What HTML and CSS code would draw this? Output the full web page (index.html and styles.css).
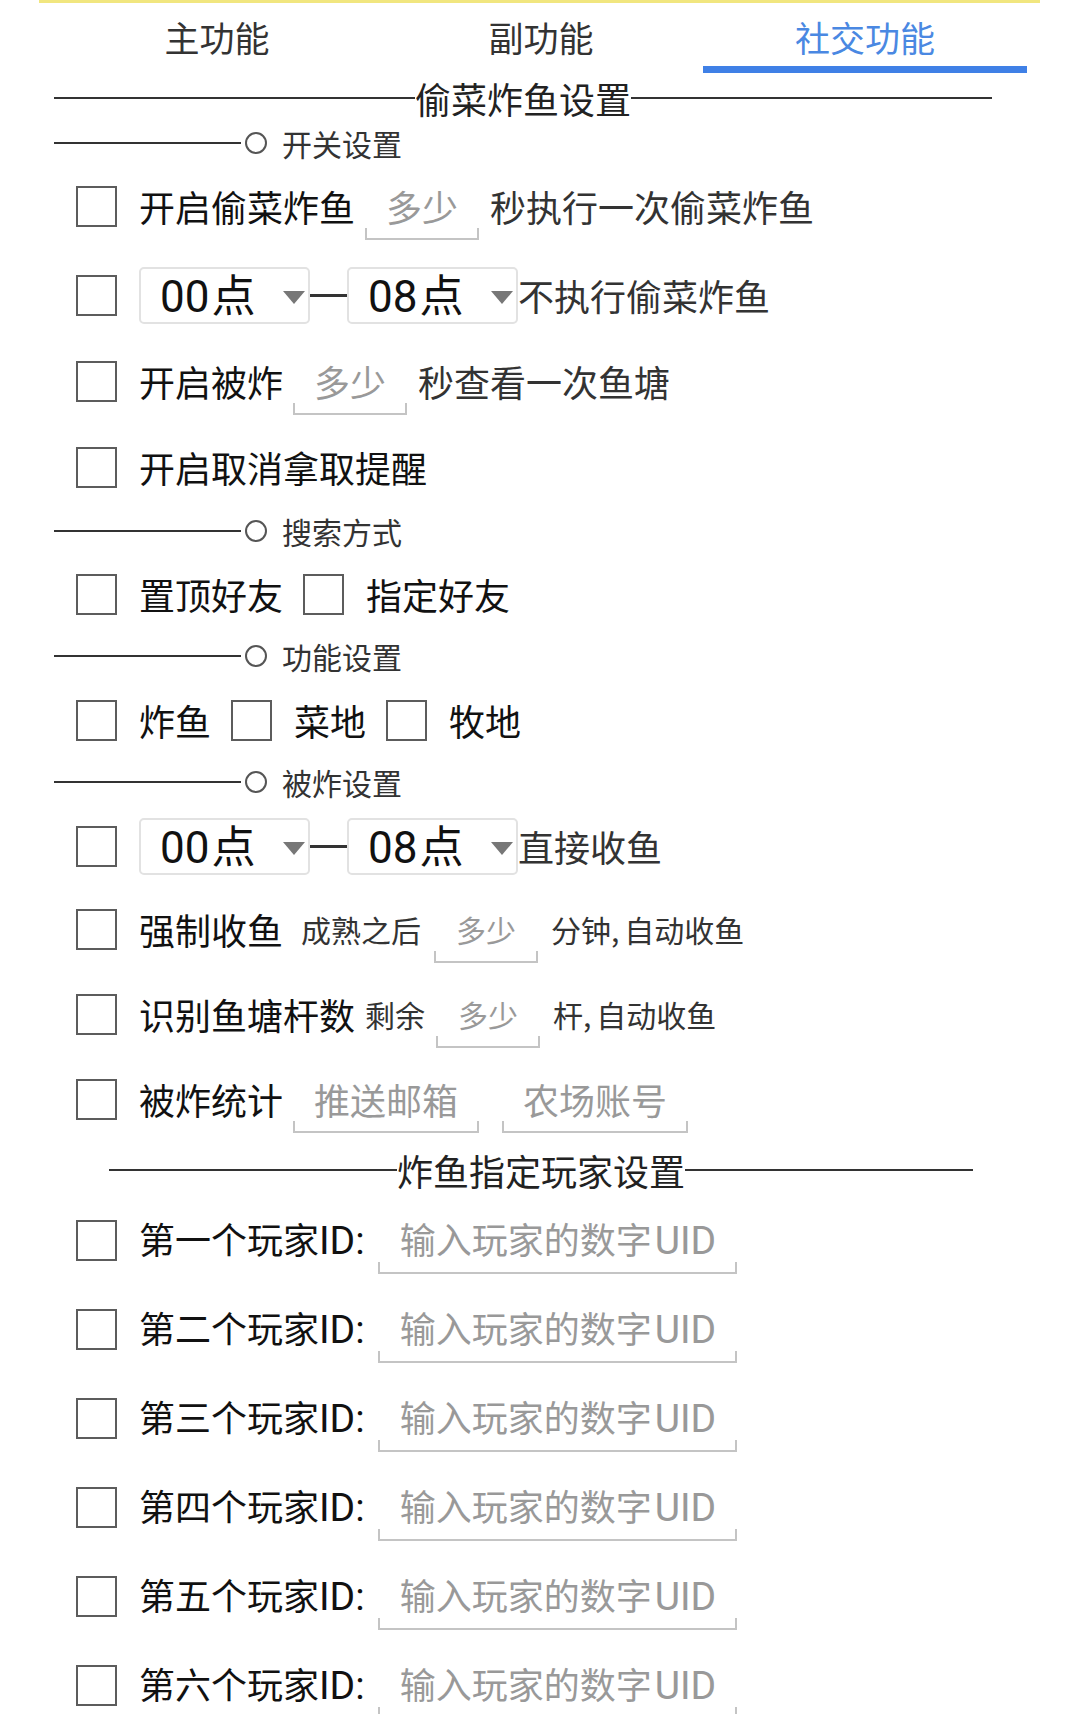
FILE: index.html
```html
<!DOCTYPE html>
<html lang="zh-CN">
<head>
<meta charset="utf-8">
<title>社交功能</title>
<link rel="stylesheet" href="styles.css">
</head>
<body>
<div class="topbar"></div>
<nav class="tabs">
  <div class="tab">主功能</div>
  <div class="tab">副功能</div>
  <div class="tab active">社交功能</div>
</nav>

<div class="heading heading-main mt-5"><span class="rule"></span><span>偷菜炸鱼设置</span><span class="rule"></span></div>

<div class="sub mt-10"><span class="sub-rule"></span><span class="dot"></span><span>开关设置</span></div>

<div class="row mt-20">
  <span class="cb"></span><span class="label">开启偷菜炸鱼</span>
  <span class="field"><span class="ph">多少</span></span>
  <span class="note">秒执行一次偷菜炸鱼</span>
</div>

<div class="row mt-32">
  <span class="cb"></span>
  <span class="select"><span class="val"><span class="num">00</span>点</span><span class="caret"></span></span>
  <span class="range-dash"></span>
  <span class="select"><span class="val"><span class="num">08</span>点</span><span class="caret"></span></span>
  <span class="note">不执行偷菜炸鱼</span>
</div>

<div class="row mt-29">
  <span class="cb"></span><span class="label">开启被炸</span>
  <span class="field"><span class="ph">多少</span></span>
  <span class="note">秒查看一次鱼塘</span>
</div>

<div class="row mt-29">
  <span class="cb"></span><span class="label">开启取消拿取提醒</span>
</div>

<div class="sub mt-20"><span class="sub-rule"></span><span class="dot"></span><span>搜索方式</span></div>

<div class="row mt-20">
  <span class="cb"></span><span class="opt">置顶好友</span>
  <span class="cb"></span><span class="opt">指定好友</span>
</div>

<div class="sub mt-18"><span class="sub-rule"></span><span class="dot"></span><span>功能设置</span></div>

<div class="row mt-21">
  <span class="cb"></span><span class="opt">炸鱼</span>
  <span class="cb"></span><span class="opt">菜地</span>
  <span class="cb"></span><span class="opt">牧地</span>
</div>

<div class="sub mt-18"><span class="sub-rule"></span><span class="dot"></span><span>被炸设置</span></div>

<div class="row mt-21">
  <span class="cb"></span>
  <span class="select"><span class="val"><span class="num">00</span>点</span><span class="caret"></span></span>
  <span class="range-dash"></span>
  <span class="select"><span class="val"><span class="num">08</span>点</span><span class="caret"></span></span>
  <span class="note">直接收鱼</span>
</div>

<div class="row mt-26">
  <span class="cb"></span><span class="label">强制收鱼</span>
  <span class="small small-gap">成熟之后</span>
  <span class="field field-sm"><span class="ph">多少</span></span>
  <span class="note note-sm">分钟<span class="comma">,</span>自动收鱼</span>
</div>

<div class="row mt-28">
  <span class="cb"></span><span class="label">识别鱼塘杆数</span>
  <span class="small small-tight">剩余</span>
  <span class="field field-sm"><span class="ph">多少</span></span>
  <span class="note note-sm">杆<span class="comma">,</span>自动收鱼</span>
</div>

<div class="row mt-28">
  <span class="cb"></span><span class="label">被炸统计</span>
  <span class="field field-gap"><span class="ph">推送邮箱</span></span>
  <span class="field"><span class="ph">农场账号</span></span>
</div>

<div class="heading heading-players mt-22"><span class="rule"></span><span>炸鱼指定玩家设置</span><span class="rule"></span></div>

<div class="players">
  <div class="row player">
    <span class="cb"></span><span class="label label-id">第一个玩家<span class="lat">ID:</span></span>
    <span class="field field-uid"><span class="ph">输入玩家的数字<span class="lat">UID</span></span></span>
  </div>
  <div class="row player">
    <span class="cb"></span><span class="label label-id">第二个玩家<span class="lat">ID:</span></span>
    <span class="field field-uid"><span class="ph">输入玩家的数字<span class="lat">UID</span></span></span>
  </div>
  <div class="row player">
    <span class="cb"></span><span class="label label-id">第三个玩家<span class="lat">ID:</span></span>
    <span class="field field-uid"><span class="ph">输入玩家的数字<span class="lat">UID</span></span></span>
  </div>
  <div class="row player">
    <span class="cb"></span><span class="label label-id">第四个玩家<span class="lat">ID:</span></span>
    <span class="field field-uid"><span class="ph">输入玩家的数字<span class="lat">UID</span></span></span>
  </div>
  <div class="row player">
    <span class="cb"></span><span class="label label-id">第五个玩家<span class="lat">ID:</span></span>
    <span class="field field-uid"><span class="ph">输入玩家的数字<span class="lat">UID</span></span></span>
  </div>
  <div class="row player">
    <span class="cb"></span><span class="label label-id">第六个玩家<span class="lat">ID:</span></span>
    <span class="field field-uid"><span class="ph">输入玩家的数字<span class="lat">UID</span></span></span>
  </div>
</div>
</body>
</html>
```
FILE: styles.css
```css
* { box-sizing: border-box; }
html, body { margin: 0; padding: 0; background: #ffffff; }
body {
  width: 1080px;
  font-family: "Noto Sans CJK SC", Roboto, sans-serif;
  color: #111;
  line-height: 1.3;
}

/* top edge */
.topbar { height: 3px; margin: 0 40px 0 39px; background: #f1e67f; }

/* tabs */
.tabs { display: grid; grid-template-columns: repeat(3, 324px); margin-left: 55px; }
.tab {
  height: 70px;
  padding-top: 4px;
  display: flex; align-items: center; justify-content: center;
  font-size: 35px; color: #333;
  border-bottom: 7px solid transparent;
}
.tab.active { color: #4a88e2; border-bottom-color: #3f80e6; }

/* section headings */
.heading { display: flex; align-items: center; height: 40px; font-size: 36px; color: #222; white-space: nowrap; }
.heading .rule { height: 2px; background: #333; flex: none; }
.heading-main { padding-left: 54px; }
.heading-main .rule { width: 361px; }
.heading-players { padding-left: 109px; }
.heading-players .rule { width: 288px; }

/* sub headings */
.sub { display: flex; align-items: center; height: 30px; padding-left: 54px; font-size: 30px; color: #333; }
.sub-rule { width: 187px; height: 2px; background: #333; flex: none; }
.dot { width: 22px; height: 22px; border: 2px solid #555; border-radius: 50%; margin-left: 4px; margin-right: 15px; flex: none; }

/* rows */
.row { display: flex; align-items: center; height: 57px; padding-left: 76px; font-size: 36px; white-space: nowrap; }
.cb { width: 41px; height: 41px; border: 2px solid #5c5c5c; flex: none; margin-right: 22px; }
.label { color: #111; margin-right: 10px; }
.label-id { margin-right: 13px; }
.opt { color: #111; margin-right: 20px; }
.note { color: #333; }
.note-sm { font-size: 30px; margin-left: 2px; }
.comma { margin-right: 5px; }
.small { font-size: 30px; color: #333; margin-right: 13px; }
.small-gap { margin-left: 8px; }
.small-tight { margin-right: 11px; }
.lat { font-family: Roboto, sans-serif; font-size: 39px; }
.ph .lat { margin-left: 3px; }

/* underline inputs */
.field {
  position: relative;
  height: 57px;
  display: flex; align-items: center;
  padding: 0 21px;
  margin-right: 11px;
  color: #999;
  flex: none;
}
.field::after {
  content: "";
  position: absolute; left: 0; right: 0; bottom: -5px;
  height: 10px;
  border: 2px solid #c4c4c4; border-top: 0;
}
.field-sm { font-size: 30px; padding: 0 22px; }
.field-gap { margin-right: 23px; }
.field-uid { padding: 0 21px 0 22px; }

/* spinners */
.select {
  width: 171px; height: 57px;
  border: 2px solid #e2e2e2; border-radius: 5px;
  display: flex; align-items: center; justify-content: space-between;
  padding: 0 3px 0 19px;
  font-size: 44px; color: #111;
  flex: none;
}
.num { font-family: Roboto, sans-serif; margin-right: 2px; }
.caret {
  width: 0; height: 0;
  border-left: 11px solid transparent;
  border-right: 11px solid transparent;
  border-top: 13px solid #777;
  margin-top: 3px;
}
.range-dash { width: 37px; height: 3px; background: #333; flex: none; }

/* player list */
.players { margin-top: 22px; }
.player + .player { margin-top: 32px; }

/* vertical rhythm */
.mt-5 { margin-top: 5px; }
.mt-10 { margin-top: 10px; }
.mt-18 { margin-top: 18px; }
.mt-20 { margin-top: 20px; }
.mt-21 { margin-top: 21px; }
.mt-22 { margin-top: 22px; }
.mt-26 { margin-top: 26px; }
.mt-28 { margin-top: 28px; }
.mt-29 { margin-top: 29px; }
.mt-32 { margin-top: 32px; }
```
